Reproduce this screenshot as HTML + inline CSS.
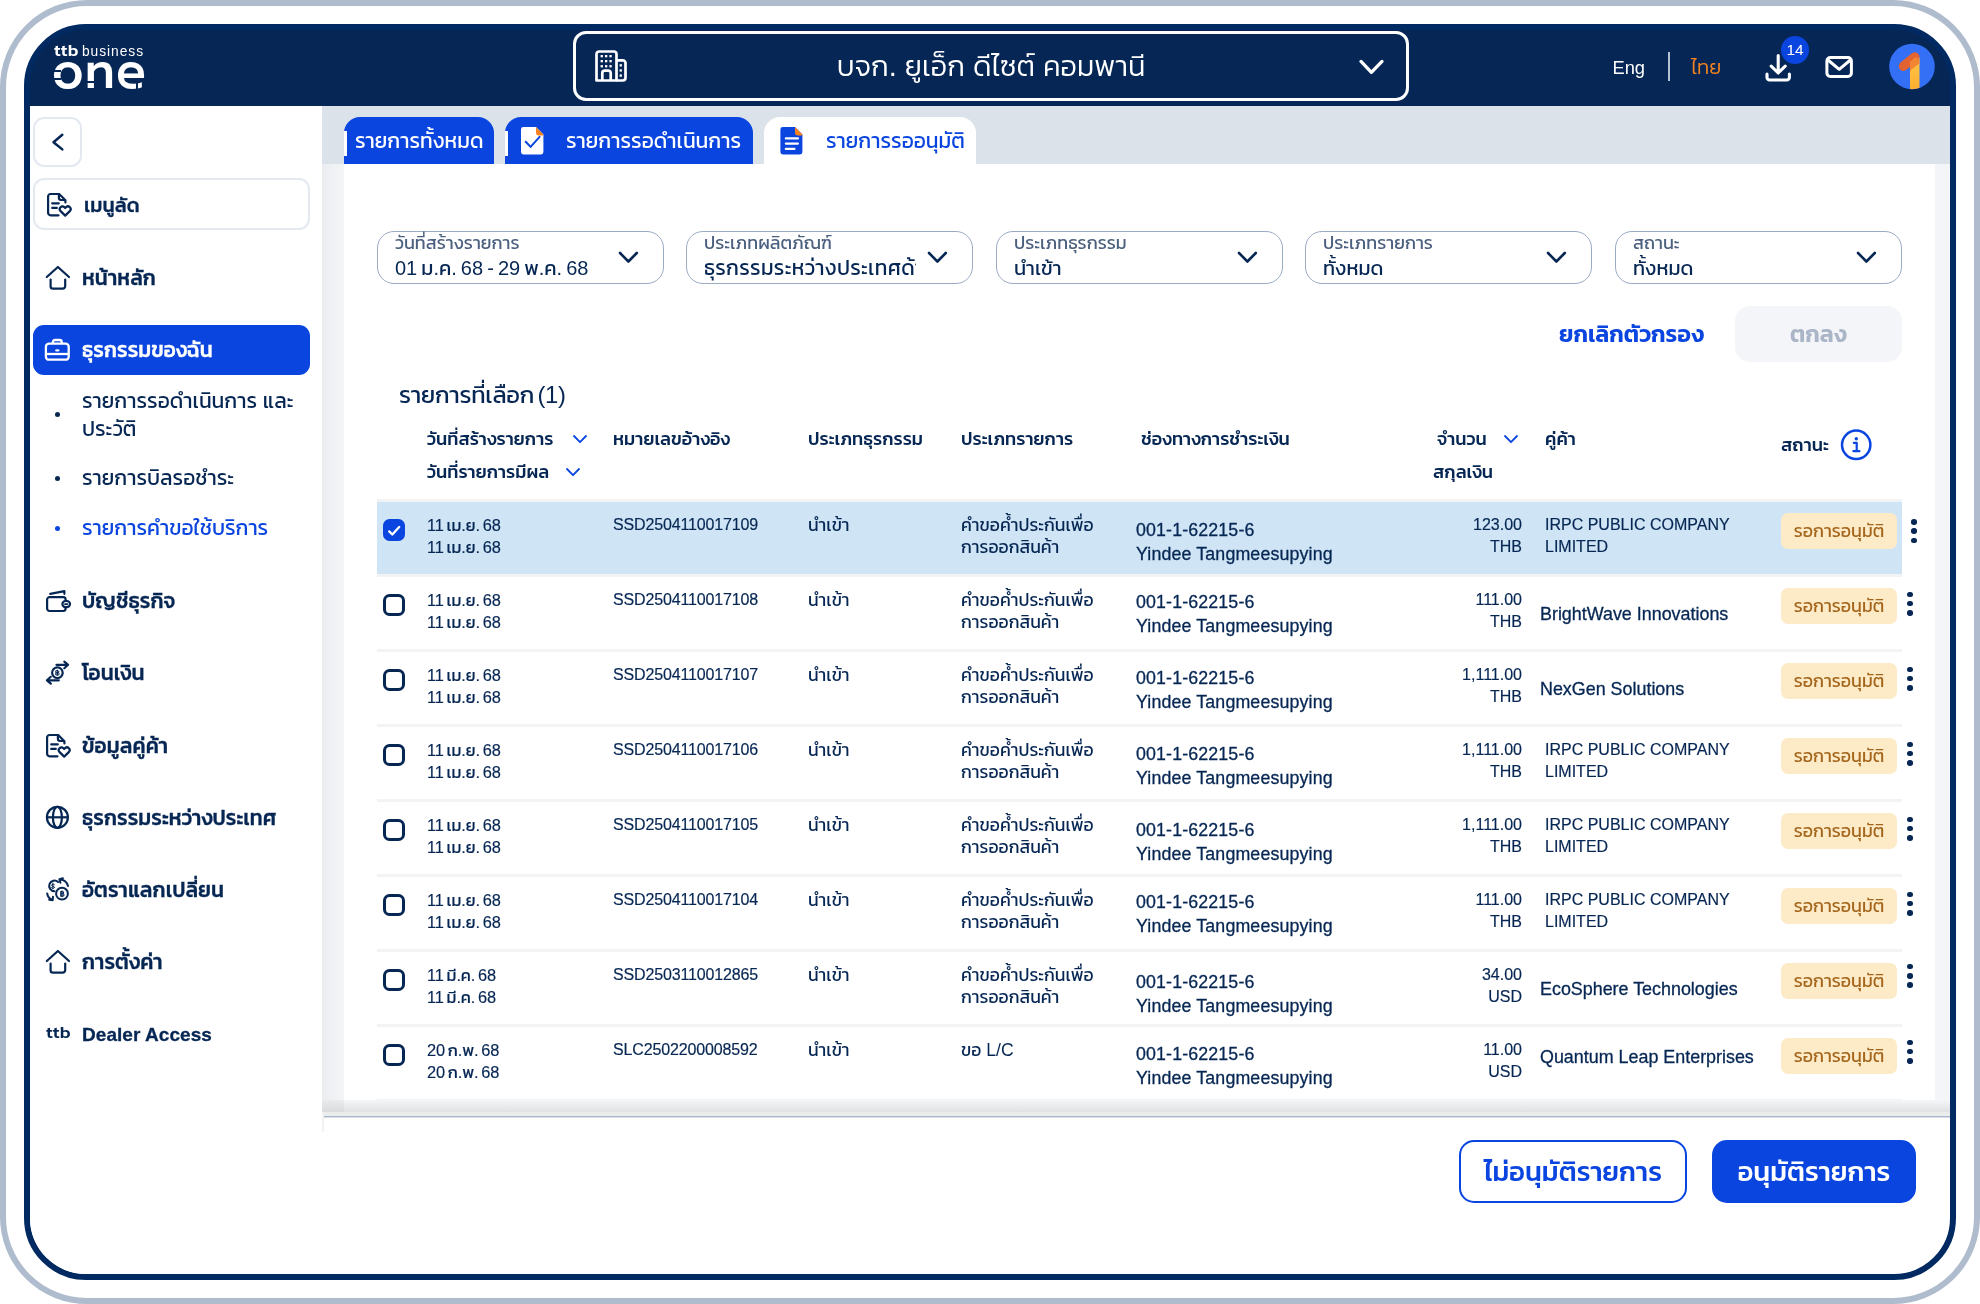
<!DOCTYPE html>
<html lang="th">
<head>
<meta charset="utf-8">
<title>ttb business one</title>
<style>
*{box-sizing:border-box;margin:0;padding:0}
html,body{width:1980px;height:1304px;background:#fff;overflow:hidden}
body{position:relative;font-family:"Liberation Sans","Kanit","Prompt","IBM Plex Sans Thai","Noto Sans Thai UI","Noto Sans Thai","Loma",sans-serif;color:#062653;font-size:16px;line-height:22px}
.a{position:absolute}
.t{position:absolute;white-space:nowrap}
.outer{position:absolute;left:0;top:0;width:1980px;height:1304px;border:6px solid #afbccd;border-radius:87px;background:#fff}
.frame{position:absolute;left:24px;top:24px;width:1932px;height:1256px;border:6px solid #002a61;border-radius:62px;background:linear-gradient(#062755 0,#062755 80px,#fff 80px);overflow:hidden}
.pg{position:absolute;left:-30px;top:-30px;width:1980px;height:1304px;will-change:transform}
/* header */
.hdr{left:30px;top:30px;width:1920px;height:76px;background:#062755}
.co{left:573px;top:31px;width:836px;height:70px;border:3px solid #fff;border-radius:13px}
.w{color:#fff}
/* sidebar */
.side{left:30px;top:106px;width:292px;height:1168px;background:#fff}
.sbtn{border:2px solid #e4e9f1;border-radius:11px;background:#fff}
.nav{font-weight:500;font-size:21px;line-height:30px;left:82px;-webkit-text-stroke:.3px currentColor;letter-spacing:.05px}
.sub{font-size:21px;line-height:28px;left:82px;font-weight:400}
.act{left:33px;top:325px;width:277px;height:50px;border-radius:11px;background:#0a45e0}
.blue{color:#0a45e0}
/* content */
.strip{left:322px;top:106px;width:1628px;height:58px;background:#dbe2ea}
.gray{left:322px;top:164px;width:1628px;height:953px;background:#f3f5f8}
.panel{left:344px;top:164px;width:1591px;height:940px;background:#fff}
.tab{top:117px;height:47px;border-radius:16px 16px 0 0;background:#0a45e0;color:#fff;font-size:21px;line-height:47px;font-weight:400}
.tab.on{background:#fff;color:#0a45e0}
.flt{top:231px;width:287px;height:53px;border:1.5px solid #9aabc4;border-radius:17px;background:#fff}
.flt .l{position:absolute;left:17px;top:1px;font-size:18px;line-height:20px;color:#4c607f;white-space:nowrap}
.flt .v{position:absolute;left:17px;top:23px;font-size:20px;word-spacing:-1.5px;line-height:26px;color:#062653;white-space:nowrap}
.flt svg{position:absolute;left:237px;top:15.500px}
.th{font-weight:500;font-size:18.2px;line-height:22px}
.row{left:377px;width:1525px;height:72px}
.row.sel{background:#cfe5f6}
.sep{left:377px;width:1525px;height:3px;background:#f1f3f5}
.row .t{line-height:22px;font-size:16px}
.cb{position:absolute;left:6px;top:17px;width:22px;height:22px;border:3px solid #062653;border-radius:6.500px;background:#fff}
.cb.on{background:#0a45e0;border-color:#0a45e0}
.c1{left:50px;top:12px;font-size:16.400px!important;word-spacing:-1.700px;letter-spacing:-.1px;-webkit-text-stroke:.15px #062653}
.c2{left:236px;top:12px;-webkit-text-stroke:.18px #062653;letter-spacing:-.15px}
.c3{left:431px;top:12px;font-size:17.5px!important}
.c4{left:584px;top:12px;font-size:17.6px!important}
.c5{left:759px;top:16px;font-size:17.8px!important;line-height:24px!important;-webkit-text-stroke:.3px #062653;letter-spacing:.14px}
.c6{right:380px;top:12px;text-align:right;-webkit-text-stroke:.18px #062653}
.c7{left:1168px;top:12px;-webkit-text-stroke:.18px #062653}
.c7b{left:1163px;top:26px;font-size:17.9px!important;-webkit-text-stroke:.3px #062653}
.bdg{position:absolute;left:1404px;top:11px;width:116px;height:36px;border-radius:7px;background:#fdebc8;color:#a4661c;font-size:17.9px;line-height:36px;text-align:center;white-space:nowrap}
.kb{position:absolute;left:1530px;top:14.5px;width:6px}
.kb i{display:block;width:5.6px;height:5.6px;border-radius:50%;background:#062653;margin-bottom:3.7px}
.btn{top:1140px;height:63px;border-radius:15px;font-weight:500;font-size:27.3px;line-height:59px;text-align:center;white-space:nowrap}
</style>
</head>
<body>
<div class="outer"></div>
<div class="frame"><div class="pg">

<!-- HEADER -->
<div class="a hdr"></div>
<div class="a co"></div>
<div class="t w" style="left:573px;width:836px;top:46px;text-align:center;font-size:29px;line-height:40px;font-weight:300">บจก. ยูเอ็ก ดีไซต์ คอมพานี</div>
<div class="t w" style="left:1612.5px;top:55px;font-size:18.3px;line-height:26px">Eng</div>
<div class="a" style="left:1668px;top:52px;width:2px;height:29px;background:#b4c0d3"></div>
<div class="t" style="left:1691px;top:53px;font-size:20.400px;line-height:28px;color:#f58220;font-weight:300">ไทย</div>


<!-- LOGO -->
<div class="t w" style="left:54px;top:39.500px;font-size:15.500px;line-height:22px;font-weight:500;letter-spacing:.2px;transform-origin:0 0;transform:scale(1.170,1);font-family:'Kanit','Liberation Sans',sans-serif">ttb</div>
<div class="t w" style="left:82px;top:41.500px;font-size:13.800px;line-height:20px;letter-spacing:.95px">business</div>
<div class="t w" style="left:52px;top:38px;font-size:50px;line-height:60px;font-weight:500;letter-spacing:1.200px;font-family:'Prompt','Kanit','Liberation Sans',sans-serif;transform-origin:0 0;transform:scale(.985,1.055)">one</div>
<div class="a" style="left:53px;top:70.300px;width:7.500px;height:1.900px;background:#062755"></div>
<div class="a" style="left:53px;top:77.700px;width:7.500px;height:1.900px;background:#062755"></div>
<div class="a" style="left:85px;top:80.600px;width:8.500px;height:2px;background:#062755"></div>
<div class="a" style="left:136.200px;top:83px;width:1.600px;height:7px;background:#062755"></div>
<!-- header icons -->
<svg class="a" style="left:595px;top:50px" width="32" height="32" viewBox="0 0 32 32" fill="none" stroke="#fff" stroke-width="2.7" stroke-linejoin="round"><path d="M1.5 4.2a2.7 2.7 0 0 1 2.7-2.7h14.6a2.7 2.7 0 0 1 2.7 2.7v26.3h-20z"/><path d="M21.5 10.3h6.3a2.7 2.7 0 0 1 2.7 2.7v14.8a2.7 2.7 0 0 1-2.7 2.7h-6.3"/><path d="M7.3 30.5v-7.5a2.4 2.4 0 0 1 2.4-2.4h3.6a2.4 2.4 0 0 1 2.4 2.4v7.5"/><g stroke="none" fill="#fff"><rect x="5.6" y="5" width="2.3" height="2.3"/><rect x="10" y="5" width="2.3" height="2.3"/><rect x="14.4" y="5" width="2.3" height="2.3"/><rect x="5.6" y="10" width="2.3" height="2.3"/><rect x="10" y="10" width="2.3" height="2.3"/><rect x="14.4" y="10" width="2.3" height="2.3"/><rect x="5.6" y="15.1" width="2.3" height="2.3"/><rect x="10" y="15.1" width="2.3" height="2.3"/><rect x="14.4" y="15.1" width="2.3" height="2.3"/><rect x="24.6" y="14.2" width="2.3" height="2.3"/><rect x="24.6" y="19.3" width="2.3" height="2.3"/><rect x="24.6" y="24.4" width="2.3" height="2.3"/></g></svg>
<svg class="a" style="left:1355px;top:55px" width="34" height="24" viewBox="0 0 34 24" fill="none" stroke="#fff" stroke-width="3.3" stroke-linecap="round" stroke-linejoin="round"><path d="M6 6.4l10.4 10.9L27 6.4"/></svg>
<svg class="a" style="left:1762px;top:52px" width="32" height="32" viewBox="0 0 32 32" fill="none" stroke="#fff" stroke-width="3.1" stroke-linecap="round" stroke-linejoin="round"><path d="M16.2 3.5v17M9.2 14.2l7 6.8 7-6.8M5 22v3.4a2.6 2.6 0 0 0 2.6 2.6h17.2a2.6 2.6 0 0 0 2.6-2.6V22"/></svg>
<div class="a" style="left:1781px;top:36px;width:28px;height:28px;border-radius:50%;background:#0a45e0"></div>
<div class="t w" style="left:1781px;top:36px;width:28px;text-align:center;font-size:15.5px;line-height:28px">14</div>
<svg class="a" style="left:1822px;top:53px" width="34" height="28" viewBox="0 0 34 28" fill="none" stroke="#fff" stroke-width="3" stroke-linecap="round" stroke-linejoin="round"><rect x="4.9" y="4.5" width="24.5" height="19" rx="3.5"/><path d="M6 7l11.2 9.3L28.4 7"/></svg>
<svg class="a" style="left:1888px;top:43px" width="48" height="48" viewBox="0 0 48 48"><defs><clipPath id="av"><circle cx="24" cy="23.5" r="22.8"/></clipPath><linearGradient id="yg" x1="0" y1="0" x2="0" y2="1"><stop offset="0" stop-color="#ffc64a"/><stop offset="1" stop-color="#ffae2e"/></linearGradient></defs><g clip-path="url(#av)"><rect width="48" height="48" fill="#3370f5"/><path d="M22 18l9.5-4v34H22z" fill="url(#yg)"/><path d="M15.5 23.2l11.3-9.3" stroke="#e26232" stroke-width="9.4" stroke-linecap="round"/><path d="M22 18.8l5.2-4.6a4.5 4.5 0 0 1 4.3 3.6v2.5l-9.5 7.5z" fill="#f28533"/></g></svg>

<!-- SIDEBAR -->
<div class="a side"></div>
<div class="a sbtn" style="left:33px;top:117px;width:49px;height:50px"></div>
<div class="a sbtn" style="left:33px;top:178px;width:277px;height:52px"></div>
<div class="t nav" style="top:190px;left:84px;font-size:19.800px">เมนูลัด</div>
<div class="t nav" style="top:263px">หน้าหลัก</div>
<div class="a act"></div>
<div class="t nav w" style="top:335px">ธุรกรรมของฉัน</div>
<div class="t sub" style="top:387px">รายการรอดำเนินการ และ<br>ประวัติ</div>
<div class="t sub" style="top:464px">รายการบิลรอชำระ</div>
<div class="t sub blue" style="top:514px">รายการคำขอใช้บริการ</div>
<div class="t nav" style="top:586px">บัญชีธุรกิจ</div>
<div class="t nav" style="top:658px">โอนเงิน</div>
<div class="t nav" style="top:731px">ข้อมูลคู่ค้า</div>
<div class="t nav" style="top:803px">ธุรกรรมระหว่างประเทศ</div>
<div class="t nav" style="top:875px">อัตราแลกเปลี่ยน</div>
<div class="t nav" style="top:947px">การตั้งค่า</div>
<div class="t nav" style="top:1020px;font-size:19px;font-weight:700">Dealer Access</div>


<!-- sidebar icons -->
<svg class="a" style="left:45px;top:130px" width="24" height="24" viewBox="0 0 24 24" fill="none" stroke="#062653" stroke-width="2.5" stroke-linecap="round" stroke-linejoin="round"><path d="M17.3 4.8L8.5 12.2l8.8 7.2"/></svg>
<svg class="a" style="left:45px;top:191px" width="28" height="27" viewBox="0 0 28 27" fill="none" stroke="#062653" stroke-width="2.2" stroke-linecap="round" stroke-linejoin="round"><path d="M13.5 24.3H5.6a2.5 2.5 0 0 1-2.5-2.5V5.5A2.5 2.5 0 0 1 5.6 3h8.6l6.2 6.2v2.2"/><path d="M13.9 3.4v3.4a2.2 2.2 0 0 0 2.2 2.2h3.6"/><path d="M7.2 12.3h6.6M7.2 16.9h4.6"/><path d="M20.2 24.6l-4.6-4.5a2.7 2.7 0 0 1 3.8-3.9l.8.8.8-.8a2.7 2.7 0 0 1 3.8 3.9z"/></svg>
<svg class="a" style="left:44px;top:264px" width="28" height="27" viewBox="0 0 28 27" fill="none" stroke="#062653" stroke-width="2.2" stroke-linecap="round" stroke-linejoin="round"><path d="M2.8 13L13.9 3l11.1 10"/><path d="M6.6 15.6v6.6a2.4 2.4 0 0 0 2.4 2.4h9.8a2.4 2.4 0 0 0 2.4-2.4v-6.6"/></svg>
<svg class="a" style="left:43px;top:337px" width="28" height="26" viewBox="0 0 28 26" fill="none" stroke="#fff" stroke-width="2.3" stroke-linejoin="round"><rect x="2.9" y="6.7" width="22.8" height="16" rx="3"/><path d="M9.9 6.4V5a2 2 0 0 1 2-2h4.8a2 2 0 0 1 2 2v1.4"/><path d="M3 17h22.6"/><ellipse cx="14.3" cy="13.4" rx="2.3" ry="1.1" fill="#fff" stroke="none"/></svg>
<svg class="a" style="left:44px;top:588px" width="28" height="26" viewBox="0 0 28 26" fill="none" stroke="#062653" stroke-width="2.2" stroke-linecap="round" stroke-linejoin="round"><path d="M21.6 13v-1.4a2.4 2.4 0 0 0-2.4-2.400H5.500a2.400 2.400 0 0 0-2.400 2.400v9a2.400 2.400 0 0 0 2.400 2.400h13.700a2.400 2.400 0 0 0 2.400-2.400v-1.200"/><path d="M6.200 5.800l14.200-2.600v2.600"/><rect x="18.400" y="13" width="7.600" height="6.200" rx="3.100"/><path d="M21 16.100h2.300" stroke-width="1.800"/></svg>
<svg class="a" style="left:44px;top:659px" width="28" height="28" viewBox="0 0 28 28" fill="none" stroke="#062653" stroke-width="2.200" stroke-linecap="round" stroke-linejoin="round"><path d="M12.500 5.800h11.500M20.300 2.600l3.800 3.200-3.800 3.500"/><path d="M14.800 21.300H3M6.800 17.800L2.900 21.300l3.900 3.400"/><circle cx="13.400" cy="13.700" r="5.300"/><path d="M13.400 11.200v5M12.200 11.700h1.600a1 1 0 0 1 0 2.100h-1.600 1.900a1.100 1.100 0 0 1 0 2.200h-1.900z" stroke-width="1"/></svg>
<svg class="a" style="left:44px;top:732px" width="28" height="27" viewBox="0 0 28 27" fill="none" stroke="#062653" stroke-width="2.200" stroke-linecap="round" stroke-linejoin="round"><path d="M13.500 24.300H5.600a2.500 2.500 0 0 1-2.500-2.500V5.500A2.500 2.500 0 0 1 5.600 3h8.600l6.200 6.200v2.200"/><path d="M13.900 3.400v3.400a2.200 2.200 0 0 0 2.200 2.200h3.600"/><path d="M7.200 12.300h6.600M7.200 16.900h4.600"/><path d="M20.200 24.600l-4.600-4.500a2.700 2.700 0 0 1 3.800-3.900l.8.800.8-.8a2.700 2.700 0 0 1 3.800 3.900z"/></svg>
<svg class="a" style="left:44px;top:804px" width="27" height="27" viewBox="0 0 27 27" fill="none" stroke="#062653" stroke-width="2.200"><circle cx="13.400" cy="13.300" r="10.500"/><ellipse cx="13.400" cy="13.300" rx="4.500" ry="10.500"/><path d="M3 13.300h20.800"/></svg>
<svg class="a" style="left:44px;top:876px" width="28" height="28" viewBox="0 0 28 28" fill="none" stroke="#062653" stroke-width="2" stroke-linecap="round" stroke-linejoin="round"><path d="M10.500 15.200a5.300 5.300 0 1 1 3.600-9.200"/><circle cx="18" cy="17.700" r="5.900"/><path d="M16 3.600a9 9 0 0 1 8 6.400M16.400 6.700l-1-3.400 3.500-1"/><path d="M3.200 17.500a8 8 0 0 0 5.200 6.400M5.200 23.800l3.500.4.300-3.500"/><path d="M8.900 7.300v5.400M10.400 8.600c-.5-.7-2.800-.7-2.800.6 0 1.400 2.900.7 2.900 2.100 0 1.300-2.500 1.200-3 .4" stroke-width="1"/><path d="M18 14.800v5.800M16.700 15.500h1.800a1.100 1.100 0 0 1 0 2.200h-1.800 2.100a1.200 1.200 0 0 1 0 2.400h-2.100z" stroke-width="1.100"/></svg>
<svg class="a" style="left:44px;top:948px" width="28" height="27" viewBox="0 0 28 27" fill="none" stroke="#062653" stroke-width="2.200" stroke-linecap="round" stroke-linejoin="round"><path d="M2.800 13L13.900 3l11.100 10"/><path d="M6.600 15.600v6.600a2.400 2.400 0 0 0 2.400 2.400h9.800a2.400 2.400 0 0 0 2.400-2.400v-6.600"/></svg>
<div class="t" style="left:45.500px;top:1021px;font-size:16.500px;line-height:24px;font-weight:500;letter-spacing:.1px;font-family:'Kanit','Liberation Sans',sans-serif;transform-origin:0 0;transform:scale(1.120,1)">ttb</div>
<div class="a" style="left:54.800px;top:412px;width:5px;height:5px;border-radius:50%;background:#062653"></div>
<div class="a" style="left:54.800px;top:476px;width:5px;height:5px;border-radius:50%;background:#062653"></div>
<div class="a" style="left:54.800px;top:526px;width:5px;height:5px;border-radius:50%;background:#0a45e0"></div>

<!-- CONTENT BG -->
<div class="a strip"></div>
<div class="a gray"></div>
<div class="a panel"></div>
<div class="a" style="left:322px;top:164px;width:22px;height:948px;background:linear-gradient(90deg,#ebedf0,#f4f5f7)"></div>

<!-- TABS -->
<div class="a tab" style="left:344px;width:150px"><span class="t" style="left:11px">รายการทั้งหมด</span></div>
<div class="a tab" style="left:505px;width:248px"><span class="t" style="left:61px">รายการรอดำเนินการ</span></div>
<div class="a tab on" style="left:764px;width:212px"><span class="t" style="left:62px">รายการรออนุมัติ</span></div>
<div class="a" style="left:344px;top:131px;width:2.5px;height:25px;background:#fff"></div>
<div class="a" style="left:505px;top:131px;width:3px;height:25px;background:#fff"></div>
<svg class="a" style="left:520px;top:126px" width="26" height="30" viewBox="0 0 26 30"><path d="M3.400 1h12.600l7.400 7.400v17.700a2.400 2.400 0 0 1-2.400 2.400h-17.600a2.400 2.400 0 0 1-2.400-2.400v-22.700a2.400 2.400 0 0 1 2.400-2.400z" fill="#fff"/><path d="M16 1l7.400 7.400v1h-5a2.400 2.400 0 0 1-2.400-2.400z" fill="#f58220"/><path d="M5.700 15.700l4.900 5.200 9-10" fill="none" stroke="#0a45e0" stroke-width="2" stroke-linecap="round" stroke-linejoin="round"/></svg>
<svg class="a" style="left:779px;top:126px" width="26" height="30" viewBox="0 0 26 30"><path d="M3.800 1h12.200l7.400 7.400v17.700a2.400 2.400 0 0 1-2.400 2.400h-17.200a2.400 2.400 0 0 1-2.400-2.400v-22.700a2.400 2.400 0 0 1 2.400-2.400z" fill="#0a45e0"/><path d="M16 1l7.400 7.400v1h-5a2.400 2.400 0 0 1-2.400-2.400z" fill="#f58220"/><path d="M6.900 12.400h12M6.900 17.600h12M6.900 22.900h8.500" stroke="#fff" stroke-width="2.300" stroke-linecap="round"/></svg>

<!-- FILTERS -->
<div class="a flt" style="left:377px"><span class="l">วันที่สร้างรายการ</span><span class="v">01 ม.ค. 68 - 29 พ.ค. 68</span><svg width="26" height="18" viewBox="0 0 26 18" fill="none" stroke="#062653" stroke-width="2.6" stroke-linecap="round" stroke-linejoin="round"><path d="M5 5l8.400 8.500L21.800 5"/></svg></div>
<div class="a flt" style="left:686px"><span class="l">ประเภทผลิตภัณฑ์</span><span class="v" style="width:212px;overflow:hidden;font-size:20.900px;letter-spacing:.3px">ธุรกรรมระหว่างประเทศด้า</span><svg width="26" height="18" viewBox="0 0 26 18" fill="none" stroke="#062653" stroke-width="2.6" stroke-linecap="round" stroke-linejoin="round"><path d="M5 5l8.400 8.500L21.800 5"/></svg></div>
<div class="a flt" style="left:996px"><span class="l">ประเภทธุรกรรม</span><span class="v">นำเข้า</span><svg width="26" height="18" viewBox="0 0 26 18" fill="none" stroke="#062653" stroke-width="2.6" stroke-linecap="round" stroke-linejoin="round"><path d="M5 5l8.400 8.500L21.800 5"/></svg></div>
<div class="a flt" style="left:1305px"><span class="l">ประเภทรายการ</span><span class="v">ทั้งหมด</span><svg width="26" height="18" viewBox="0 0 26 18" fill="none" stroke="#062653" stroke-width="2.6" stroke-linecap="round" stroke-linejoin="round"><path d="M5 5l8.400 8.500L21.800 5"/></svg></div>
<div class="a flt" style="left:1615px"><span class="l">สถานะ</span><span class="v">ทั้งหมด</span><svg width="26" height="18" viewBox="0 0 26 18" fill="none" stroke="#062653" stroke-width="2.6" stroke-linecap="round" stroke-linejoin="round"><path d="M5 5l8.400 8.500L21.800 5"/></svg></div>

<div class="t blue" style="left:1559px;top:318px;font-size:23.2px;line-height:32px;font-weight:600">ยกเลิกตัวกรอง</div>
<div class="a" style="left:1735px;top:306px;width:167px;height:56px;border-radius:15px;background:#f3f5f8"></div>
<div class="t" style="left:1735px;width:167px;text-align:center;top:317px;font-size:23.2px;line-height:34px;font-weight:600;color:#aab5c7">ตกลง</div>

<div class="t" style="left:399px;top:378px;font-size:23.8px;line-height:34px;word-spacing:-3px;letter-spacing:-.25px">รายการที่เลือก (1)</div>

<!-- TABLE HEAD -->
<div class="t th" style="left:427px;top:428px">วันที่สร้างรายการ</div>
<div class="t th" style="left:427px;top:461px">วันที่รายการมีผล</div>
<div class="t th" style="left:613px;top:428px">หมายเลขอ้างอิง</div>
<div class="t th" style="left:808px;top:428px">ประเภทธุรกรรม</div>
<div class="t th" style="left:961px;top:428px">ประเภทรายการ</div>
<div class="t th" style="left:1141px;top:428px">ช่องทางการชำระเงิน</div>
<div class="t th" style="left:1437px;top:428px">จำนวน</div>
<div class="t th" style="left:1433px;top:461px">สกุลเงิน</div>
<div class="t th" style="left:1545px;top:428px">คู่ค้า</div>
<div class="t th" style="left:1781px;top:434px">สถานะ</div>

<svg class="a" style="left:571px;top:432px" width="18" height="14" viewBox="0 0 18 14" fill="none" stroke="#0a45e0" stroke-width="1.800" stroke-linecap="round" stroke-linejoin="round"><path d="M3 4l6 6.200L15 4"/></svg>
<svg class="a" style="left:564px;top:465px" width="18" height="14" viewBox="0 0 18 14" fill="none" stroke="#0a45e0" stroke-width="1.800" stroke-linecap="round" stroke-linejoin="round"><path d="M3 4l6 6.200L15 4"/></svg>
<svg class="a" style="left:1502px;top:432px" width="18" height="14" viewBox="0 0 18 14" fill="none" stroke="#0a45e0" stroke-width="1.800" stroke-linecap="round" stroke-linejoin="round"><path d="M3 4l6 6.200L15 4"/></svg>
<svg class="a" style="left:1839px;top:428px" width="34" height="34" viewBox="0 0 34 34" fill="none" stroke="#0a45e0" stroke-width="2.500"><circle cx="17.200" cy="16.800" r="14.200"/><circle cx="17.300" cy="10.800" r="1.700" fill="#0a45e0" stroke="none"/><path d="M14.800 14.800h2.900v8.200M14.400 23.200h6" stroke-width="2.200" stroke-linecap="round" stroke-linejoin="round"/></svg>

<!-- ROWS -->
<div class="a sep" style="top:499px"></div>
<div class="a row sel" style="top:502px"><span class="cb on"><svg width="22" height="22" viewBox="0 0 22 22" style="position:absolute;left:-3px;top:-3px"><path d="M6.2 12.4l3.1 3.1 6.900-7.500" fill="none" stroke="#fff" stroke-width="2.300" stroke-linecap="round" stroke-linejoin="round"/></svg></span><span class="t c1">11 เม.ย. 68<br>11 เม.ย. 68</span><span class="t c2">SSD2504110017109</span><span class="t c3">นำเข้า</span><span class="t c4">คำขอค้ำประกันเพื่อ<br>การออกสินค้า</span><span class="t c5" style="top:16px">001-1-62215-6<br>Yindee Tangmeesupying</span><span class="t c6">123.00<br>THB</span><span class="t c7">IRPC PUBLIC COMPANY<br>LIMITED</span><span class="bdg">รอการอนุมัติ</span><span class="kb" style="left:1534px;top:17px"><i></i><i></i><i></i></span></div>
<div class="a sep" style="top:574px"></div>
<div class="a row" style="top:577px"><span class="cb"></span><span class="t c1">11 เม.ย. 68<br>11 เม.ย. 68</span><span class="t c2">SSD2504110017108</span><span class="t c3">นำเข้า</span><span class="t c4">คำขอค้ำประกันเพื่อ<br>การออกสินค้า</span><span class="t c5" style="top:12.8px">001-1-62215-6<br>Yindee Tangmeesupying</span><span class="t c6">111.00<br>THB</span><span class="t c7b">BrightWave Innovations</span><span class="bdg">รอการอนุมัติ</span><span class="kb"><i></i><i></i><i></i></span></div>
<div class="a sep" style="top:649px"></div>
<div class="a row" style="top:652px"><span class="cb"></span><span class="t c1">11 เม.ย. 68<br>11 เม.ย. 68</span><span class="t c2">SSD2504110017107</span><span class="t c3">นำเข้า</span><span class="t c4">คำขอค้ำประกันเพื่อ<br>การออกสินค้า</span><span class="t c5" style="top:13.7px">001-1-62215-6<br>Yindee Tangmeesupying</span><span class="t c6">1,111.00<br>THB</span><span class="t c7b">NexGen Solutions</span><span class="bdg">รอการอนุมัติ</span><span class="kb"><i></i><i></i><i></i></span></div>
<div class="a sep" style="top:724px"></div>
<div class="a row" style="top:727px"><span class="cb"></span><span class="t c1">11 เม.ย. 68<br>11 เม.ย. 68</span><span class="t c2">SSD2504110017106</span><span class="t c3">นำเข้า</span><span class="t c4">คำขอค้ำประกันเพื่อ<br>การออกสินค้า</span><span class="t c5" style="top:14.6px">001-1-62215-6<br>Yindee Tangmeesupying</span><span class="t c6">1,111.00<br>THB</span><span class="t c7">IRPC PUBLIC COMPANY<br>LIMITED</span><span class="bdg">รอการอนุมัติ</span><span class="kb"><i></i><i></i><i></i></span></div>
<div class="a sep" style="top:799px"></div>
<div class="a row" style="top:802px"><span class="cb"></span><span class="t c1">11 เม.ย. 68<br>11 เม.ย. 68</span><span class="t c2">SSD2504110017105</span><span class="t c3">นำเข้า</span><span class="t c4">คำขอค้ำประกันเพื่อ<br>การออกสินค้า</span><span class="t c5" style="top:16px">001-1-62215-6<br>Yindee Tangmeesupying</span><span class="t c6">1,111.00<br>THB</span><span class="t c7">IRPC PUBLIC COMPANY<br>LIMITED</span><span class="bdg">รอการอนุมัติ</span><span class="kb"><i></i><i></i><i></i></span></div>
<div class="a sep" style="top:874px"></div>
<div class="a row" style="top:877px"><span class="cb"></span><span class="t c1">11 เม.ย. 68<br>11 เม.ย. 68</span><span class="t c2">SSD2504110017104</span><span class="t c3">นำเข้า</span><span class="t c4">คำขอค้ำประกันเพื่อ<br>การออกสินค้า</span><span class="t c5" style="top:12.8px">001-1-62215-6<br>Yindee Tangmeesupying</span><span class="t c6">111.00<br>THB</span><span class="t c7">IRPC PUBLIC COMPANY<br>LIMITED</span><span class="bdg">รอการอนุมัติ</span><span class="kb"><i></i><i></i><i></i></span></div>
<div class="a sep" style="top:949px"></div>
<div class="a row" style="top:952px"><span class="cb"></span><span class="t c1">11 มี.ค. 68<br>11 มี.ค. 68</span><span class="t c2">SSD2503110012865</span><span class="t c3">นำเข้า</span><span class="t c4">คำขอค้ำประกันเพื่อ<br>การออกสินค้า</span><span class="t c5" style="top:17.8px">001-1-62215-6<br>Yindee Tangmeesupying</span><span class="t c6">34.00<br>USD</span><span class="t c7b">EcoSphere Technologies</span><span class="bdg">รอการอนุมัติ</span><span class="kb" style="top:11.7px"><i></i><i></i><i></i></span></div>
<div class="a sep" style="top:1024px"></div>
<div class="a row" style="top:1027px"><span class="cb"></span><span class="t c1">20 ก.พ. 68<br>20 ก.พ. 68</span><span class="t c2">SLC2502200008592</span><span class="t c3">นำเข้า</span><span class="t c4">ขอ L/C</span><span class="t c5" style="top:14.6px">001-1-62215-6<br>Yindee Tangmeesupying</span><span class="t c6">11.00<br>USD</span><span class="t c7b" style="top:18.5px">Quantum Leap Enterprises</span><span class="bdg">รอการอนุมัติ</span><span class="kb" style="top:12.5px"><i></i><i></i><i></i></span></div>
<div class="a sep" style="top:1099px"></div>

<!-- FOOTER -->
<div class="a" style="left:324px;top:1100px;width:1626px;height:12px;background:linear-gradient(#f5f6f7,#dfe1e3)"></div>
<div class="a" style="left:324px;top:1112px;width:1626px;height:4px;background:#ebecec"></div>
<div class="a" style="left:324px;top:1116px;width:1626px;height:1px;background:#a9b7cc"></div>
<div class="a" style="left:324px;top:1117px;width:1626px;height:1px;background:#d9dfe9"></div>
<div class="a" style="left:322px;top:1112px;width:2px;height:20px;background:#f1f2f4"></div>
<div class="a" style="left:322px;top:1100px;width:22px;height:12px;background:linear-gradient(#e9ebed,#d9dbdd)"></div>
<div class="a btn blue" style="left:1459px;width:228px;border:2px solid #0a45e0;background:#fff">ไม่อนุมัติรายการ</div>
<div class="a btn w" style="left:1712px;width:204px;background:#0a45e0;line-height:63px">อนุมัติรายการ</div>

</div></div>
</body>
</html>
